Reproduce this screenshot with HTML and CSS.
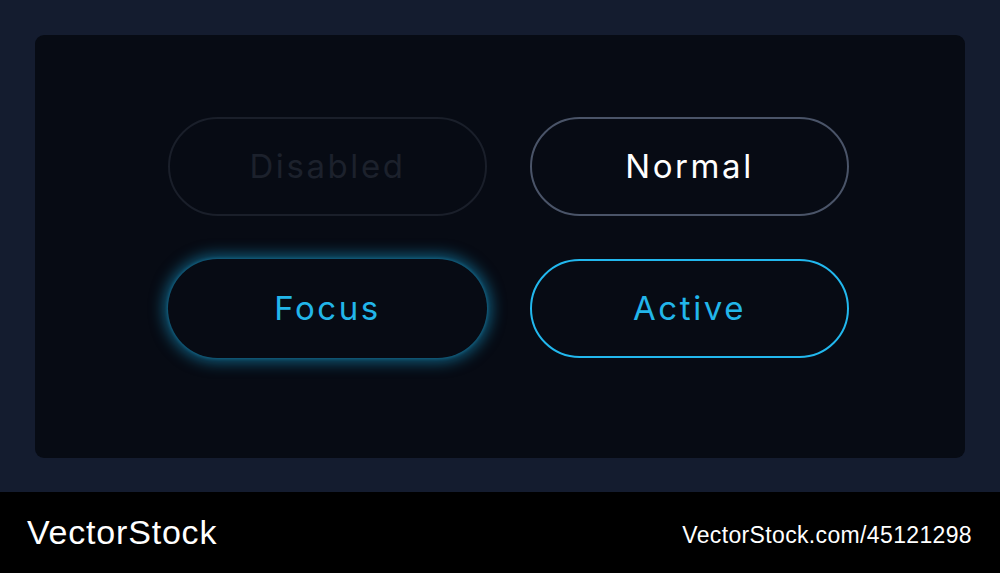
FILE: index.html
```
<!DOCTYPE html>
<html>
<head>
<meta charset="utf-8">
<link rel="stylesheet" href="styles.css">
</head>
<body>
<div class="stage">
  <div class="panel">
    <div class="grid">
      <div class="btn btn-disabled">Disabled</div>
      <div class="btn btn-normal">Normal</div>
      <div class="btn btn-focus">Focus</div>
      <div class="btn btn-active">Active</div>
    </div>
  </div>
</div>
<div class="footer">
  <div class="brand">VectorStock</div>
  <div class="url">VectorStock.com/45121298</div>
</div>
</body>
</html>
```
FILE: styles.css
```
html, body {
  margin: 0;
  padding: 0;
}
body {
  width: 1000px;
  height: 573px;
  overflow: hidden;
  background: #000;
}
.stage {
  height: 492px;
  box-sizing: border-box;
  padding: 35px;
  background: #141c2f;
}
.panel {
  height: 423px;
  box-sizing: border-box;
  background: #070b14;
  border-radius: 9px;
  padding: 82px 0 0 133px;
}
.grid {
  display: grid;
  grid-template-columns: 319px 319px;
  grid-auto-rows: 99px;
  column-gap: 43px;
  row-gap: 43px;
}
.btn {
  box-sizing: border-box;
  border-radius: 50px;
  border: 2px solid transparent;
  display: flex;
  align-items: center;
  justify-content: center;
  font-family: Inter, "Open Sans", sans-serif;
  font-size: 33px;
  font-weight: 400;
  letter-spacing: 2.6px;
  padding-bottom: 2px;
}
.btn-disabled {
  border-color: #1a1f2a;
  color: #1c212c;
}
.btn-normal {
  border-color: #4a5468;
  color: #ffffff;
}
.btn-focus {
  border: none;
  color: #22b6ea;
  box-shadow: 0 0 14px 5px rgba(20, 135, 178, 0.6), 0 0 3px 1px rgba(30, 120, 160, 0.5);
  background: #070b14;
}
.btn-active {
  border-color: #22b8ee;
  color: #22b6ea;
}
.footer {
  height: 81px;
  background: #000;
  display: flex;
  align-items: center;
  justify-content: space-between;
  padding: 0 28px 0 27px;
  color: #fff;
  font-family: "Liberation Sans", Arial, sans-serif;
}
.brand {
  font-size: 34px;
  letter-spacing: 0.8px;
  padding-bottom: 1px;
}
.url {
  font-size: 23px;
  letter-spacing: 0.35px;
  padding-top: 6px;
}
```
